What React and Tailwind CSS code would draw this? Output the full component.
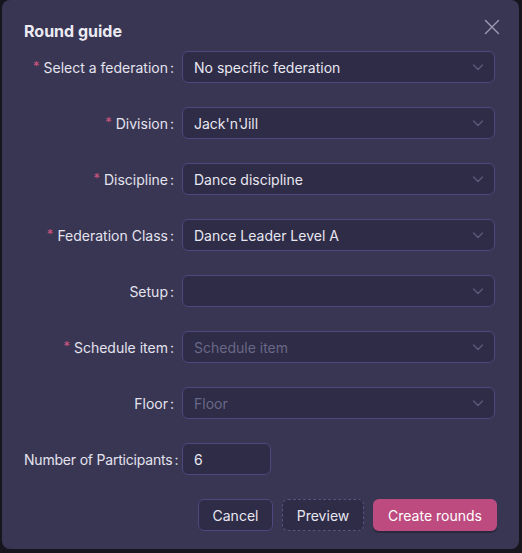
import { X } from "lucide-react";

// ── Datos del formulario ──────────────────────────────────────────────────────
const ROWS = [
  { label: "Select a federation", value: "No specific federation", required: true },
  { label: "Division", value: "Jack'n'Jill", required: true },
  { label: "Discipline", value: "Dance discipline", required: true },
  { label: "Federation Class", value: "Dance Leader Level A", required: true },
  { label: "Setup", value: "" },
  { label: "Schedule item", placeholder: "Schedule item", required: true },
  { label: "Floor", placeholder: "Floor" },
];

function Chevron() {
  return (
    <svg width="12" height="12" viewBox="0 0 12 12" fill="none" className="shrink-0">
      <path d="M1.5 4l4.5 4.5L10.5 4" stroke="#5f5c80" strokeWidth="1.2" strokeLinecap="round" strokeLinejoin="round" />
    </svg>
  );
}

function Label({ text, required }) {
  return (
    <label className="flex items-center justify-end w-[158px] shrink-0 text-[14px] text-[#e4e3ee] whitespace-nowrap">
      {required && <span className="text-[#d2557f] mr-[4px] text-[13px]">*</span>}
      <span>{text}</span>
      <span className="ml-[2px] mr-[8px]">:</span>
    </label>
  );
}

function Select({ value, placeholder }) {
  return (
    <div className="flex-1 h-[32px] flex items-center justify-between pl-[11px] pr-[10px] rounded-[6px] border border-[#4c4880] bg-[#2e2c46]">
      {value ? (
        <span className="text-[14px] text-[#e8e7f1]">{value}</span>
      ) : (
        <span className="text-[14px] text-[#6a6888]">{placeholder}</span>
      )}
      <Chevron />
    </div>
  );
}

export default function App() {
  return (
    <div className="w-[522px] h-[553px] bg-[#16151d] overflow-hidden" style={{ fontFamily: "Inter, 'Liberation Sans', sans-serif" }}>
      <div className="ml-[2px] w-[517px] h-[549px] rounded-[8px] bg-[#383653] relative pl-[22px] pr-[24px] pt-[20px]">
        {/* Cierre */}
        <button className="absolute right-[14px] top-[14px] w-[26px] h-[26px] flex items-center justify-center text-[#9c9ab3]">
          <X size={26} strokeWidth={1.3} />
        </button>

        <h2 className="text-[16px] leading-[22px] font-bold text-[#ecebf3] mb-[9px]">Round guide</h2>

        <div className="flex flex-col gap-[24px]">
          {ROWS.map((r) => (
            <div key={r.label} className="flex items-center">
              <Label text={r.label} required={r.required} />
              <Select value={r.value} placeholder={r.placeholder} />
            </div>
          ))}

          <div className="flex items-center">
            <label className="flex items-center w-[158px] shrink-0 text-[14px] tracking-[-0.2px] text-[#e4e3ee] whitespace-nowrap">
              <span>Number of Participants</span>
              <span className="ml-[2px]">:</span>
            </label>
            <div className="w-[89px] h-[32px] flex items-center pl-[11px] rounded-[6px] border border-[#4c4880] bg-[#2e2c46] text-[14px] text-[#e8e7f1]">
              6
            </div>
          </div>
        </div>

        {/* Acciones */}
        <div className="flex justify-end gap-[9px] mt-[24px] -mr-[2px]">
          <button className="h-[32px] w-[75px] rounded-[6px] border border-[#4c4880] bg-[#2e2c46] text-[14px] text-[#e8e7f1]">
            Cancel
          </button>
          <button className="h-[32px] w-[82px] rounded-[6px] border border-dashed border-[#57537f] bg-[#2e2c46] text-[14px] text-[#e8e7f1]">
            Preview
          </button>
          <button className="h-[32px] w-[124px] rounded-[6px] bg-[#bd4b80] text-[14px] text-white shadow-[0_2px_0_rgba(0,0,0,0.25)]">
            Create rounds
          </button>
        </div>
      </div>
    </div>
  );
}
